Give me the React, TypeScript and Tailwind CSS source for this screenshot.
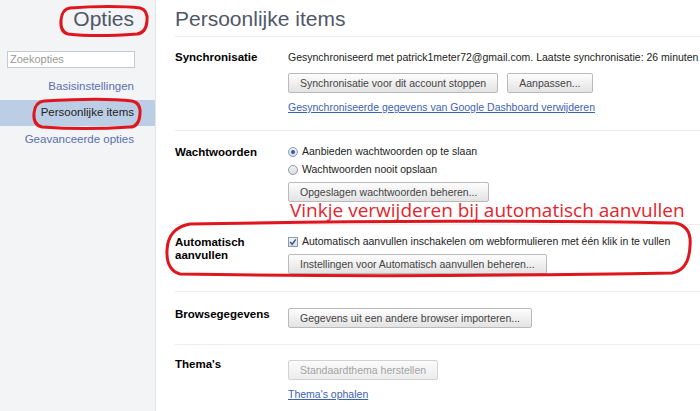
import type { ReactNode } from "react";

const font = { fontFamily: '"Liberation Sans", Arial, sans-serif' };

function Button({ children, disabled }: { children: ReactNode; disabled?: boolean }) {
  return (
    <button
      className={
        disabled
          ? "h-[20px] px-[11px] text-[10.5px] leading-[18px] rounded-[2px] border border-[#d2d2d2] bg-gradient-to-b from-[#fbfbfb] to-[#ececec] text-[#a3a3a3] whitespace-nowrap"
          : "h-[20px] px-[11px] text-[10.5px] leading-[18px] rounded-[2px] border border-[#bababa] bg-gradient-to-b from-[#fdfdfd] to-[#e3e3e3] text-[#444] whitespace-nowrap"
      }
    >
      {children}
    </button>
  );
}

function Radio({ checked }: { checked?: boolean }) {
  return (
    <span className="w-[10px] h-[10px] rounded-full border border-[#8f9aa8] bg-gradient-to-b from-[#f2f2f2] to-[#d8dde4] flex items-center justify-center mr-[4px] shrink-0">
      {checked && <span className="w-[4px] h-[4px] rounded-full bg-[#2c5fa8]" />}
    </span>
  );
}

function Section({
  label,
  labelTop,
  className,
  children,
}: {
  label: ReactNode;
  labelTop: string;
  className: string;
  children: ReactNode;
}) {
  return (
    <div className={"flex border-b border-[#ececec] " + className}>
      <div className={"w-[113px] shrink-0 text-[11.5px] leading-[13px] font-bold text-black " + labelTop}>
        {label}
      </div>
      <div className="flex flex-col items-start text-[10.5px] text-[#222]">{children}</div>
    </div>
  );
}

export default function App() {
  return (
    <div className="relative w-[700px] h-[411px] overflow-hidden bg-white flex" style={font}>
      {/* sidebar */}
      <div className="w-[156px] shrink-0 bg-[#f3f4f6] border-r border-[#e3e4e8] flex flex-col">
        <div className="pr-[21px] pt-[6px] text-right text-[21px] leading-[26px] text-[#4f5766]">Opties</div>
        <div className="px-[7px] mt-[19px]">
          <div className="h-[17px] w-[128px] bg-white border border-[#c6c9ce] text-[11px] leading-[15px] pl-[2px] text-[#9a9a9a]">
            Zoekopties
          </div>
        </div>
        <div className="mt-[6px] flex flex-col text-[11.5px]">
          <div className="h-[26px] pr-[21px] flex items-center justify-end text-[#5a6fb1]">Basisinstellingen</div>
          <div className="h-[26px] pr-[21px] flex items-center justify-end bg-[#bccde6] text-[#222]">Persoonlijke items</div>
          <div className="h-[27px] pr-[21px] flex items-center justify-end text-[#5a6fb1]">Geavanceerde opties</div>
        </div>
      </div>

      {/* main */}
      <div className="flex-1 pl-[19px] flex flex-col min-w-0">
        <div className="pt-[7px] pb-[5px] text-[21px] leading-[24px] text-[#505868] border-b border-[#ececec] whitespace-nowrap">
          Persoonlijke items
        </div>

        <Section label="Synchronisatie" labelTop="mt-[1px]" className="pt-[13px] pb-[16px]">
          <div className="leading-[14px] whitespace-nowrap">
            Gesynchroniseerd met patrick1meter72@gmail.com. Laatste synchronisatie: 26 minuten geleden
          </div>
          <div className="flex gap-[9px] mt-[9px]">
            <Button>Synchronisatie voor dit account stoppen</Button>
            <Button>Aanpassen...</Button>
          </div>
          <a className="mt-[7px] leading-[14px] text-[#3d62b3] underline">
            Gesynchroniseerde gegevens van Google Dashboard verwijderen
          </a>
        </Section>

        <Section label="Wachtwoorden" labelTop="mt-[3px]" className="pt-[12px] pb-[22px]">
          <div className="h-[18px] flex items-center">
            <Radio checked />
            Aanbieden wachtwoorden op te slaan
          </div>
          <div className="h-[18px] flex items-center">
            <Radio />
            Wachtwoorden nooit opslaan
          </div>
          <div className="mt-[3px]">
            <Button>Opgeslagen wachtwoorden beheren...</Button>
          </div>
        </Section>

        <Section
          label={
            <>
              Automatisch
              <br />
              aanvullen
            </>
          }
          labelTop="mt-[1px]"
          className="pt-[10px] pb-[17px]"
        >
          <div className="h-[14px] flex items-center whitespace-nowrap">
            <span className="w-[10px] h-[10px] border border-[#8f9aa8] bg-gradient-to-b from-[#f4f4f4] to-[#d9dee5] mr-[4px] flex items-center justify-center">
              <svg width="8" height="8" viewBox="0 0 8 8">
                <path d="M1.2 4 L3.2 6.2 L6.8 1.4" fill="none" stroke="#3a5a8c" strokeWidth="1.5" />
              </svg>
            </span>
            Automatisch aanvullen inschakelen om webformulieren met één klik in te vullen
          </div>
          <div className="mt-[5px]">
            <Button>Instellingen voor Automatisch aanvullen beheren...</Button>
          </div>
        </Section>

        <Section label="Browsegegevens" labelTop="mt-0" className="pt-[16px] pb-[16px]">
          <Button>Gegevens uit een andere browser importeren...</Button>
        </Section>

        <div className="flex pt-[13px]">
          <div className="w-[113px] shrink-0 text-[11.5px] leading-[13px] font-bold text-black">Thema's</div>
          <div className="flex flex-col items-start text-[10.5px] mt-[2px]">
            <Button disabled>Standaardthema herstellen</Button>
            <a className="mt-[7px] leading-[14px] text-[#3d62b3] underline">Thema's ophalen</a>
          </div>
        </div>
      </div>

      {/* red annotations */}
      <div
        className="absolute left-[290px] top-[198px] text-[19px] leading-[24px] text-[#e3252c] whitespace-nowrap pointer-events-none"
        style={{ fontFamily: '"Open Sans", "Noto Sans", sans-serif' }}
      >
        Vinkje verwijderen bij automatisch aanvullen
      </div>
      <svg className="absolute inset-0 pointer-events-none" width="700" height="411" viewBox="0 0 700 411">
        <g fill="none" stroke="#e0161f" strokeWidth="3" strokeLinecap="round">
          <path d="M70 8 C95 6 125 6 140 8 Q148 10 147 21 Q146 33 137 34 C110 36 85 36 68 34 Q60 32 61 20 Q62 9 70 8 Z" />
          <path d="M44 101 C80 99 115 99 132 101 Q141 103 140 114 Q139 127 130 127 C100 129 70 129 42 127 Q33 125 34 113 Q35 102 44 101 Z" />
          <path d="M190 224 C350 221 560 220 675 223 Q692 226 690 246 Q689 270 672 273 C500 276 300 276 180 274 Q166 270 167 250 Q168 228 190 224 Z" />
        </g>
      </svg>
    </div>
  );
}
